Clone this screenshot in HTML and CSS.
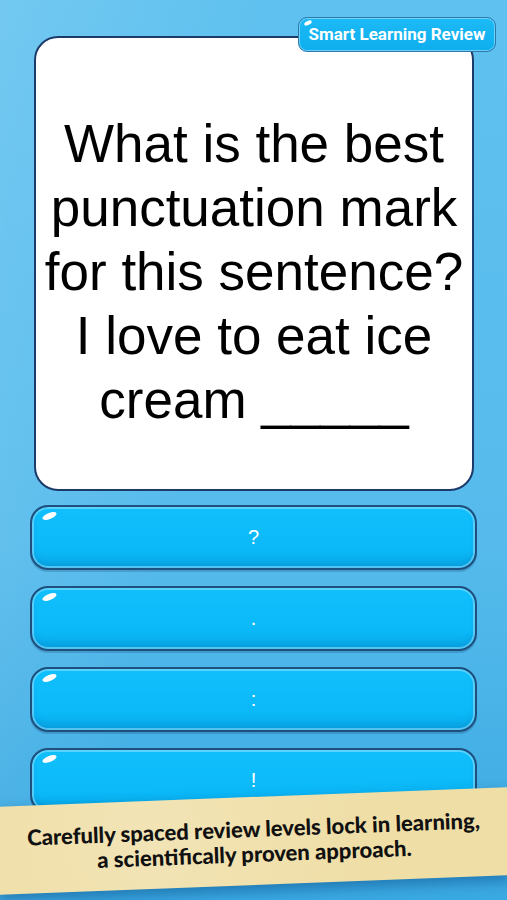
FILE: index.html
```html
<!DOCTYPE html>
<html lang="en">
  <head>
    <meta charset="utf-8" />
    <title>Smart Learning Review</title>
    <link rel="stylesheet" href="styles.css">
  </head>

  <body>
    <div class="screen">
      <div class="badge">Smart Learning Review</div>

      <div class="question">
        <p>What is the best punctuation mark for this sentence? I love to eat ice cream _____</p>
      </div>

      <ul class="answers">
        <li><button>?</button></li>
        <li><button>.</button></li>
        <li><button>:</button></li>
        <li><button>!</button></li>
      </ul>

      <div class="banner">
        <p>Carefully spaced review levels lock in learning,<br>a scientifically proven approach.</p>
      </div>
    </div>
  </body>
</html>
```

FILE: styles.css
```css
html,
body {
  margin: 0;
  padding: 0;
}

.screen {
  position: relative;
  width: 507px;
  height: 900px;
  overflow: hidden;
  box-sizing: border-box;
  padding: 36px 0 0;
  background:
    linear-gradient(100deg, rgba(255, 255, 255, 0.12) 0%, rgba(255, 255, 255, 0) 40%),
    linear-gradient(180deg, #5fc1ef 0%, #56bbec 60%, #3aa9e2 100%);
  font-family: "Liberation Sans", Arial, sans-serif;
}

.badge {
  position: absolute;
  top: 17px;
  left: 298px;
  width: 198px;
  height: 35px;
  box-sizing: border-box;
  border: 1px solid #2b78ad;
  border-radius: 9px;
  background: linear-gradient(180deg, #1cbaf6 0%, #0eaeee 100%);
  box-shadow: inset 0 0 0 1px rgba(170, 230, 255, 0.6);
  color: #fff;
  font-family: Roboto, "Liberation Sans", sans-serif;
  font-weight: bold;
  font-size: 17px;
  line-height: 33px;
  text-align: center;
  white-space: nowrap;
  z-index: 2;
}

.badge::before {
  content: "";
  position: absolute;
  top: 3px;
  left: 5px;
  width: 8px;
  height: 4px;
  border-radius: 50%;
  background: #fff;
  transform: rotate(-25deg);
}

.question {
  margin: 0 0 0 34px;
  width: 440px;
  height: 455px;
  box-sizing: border-box;
  border: 2px solid #1c3b6b;
  border-radius: 24px;
  background: #fff;
  display: flex;
  align-items: center;
  justify-content: center;
  padding: 16px 2px 0;
}

.question p {
  margin: 0;
  font-size: 53px;
  line-height: 64px;
  text-align: center;
  color: #000;
}

.answers {
  list-style: none;
  margin: 14px 0 0 30px;
  padding: 0;
  width: 447px;
  display: flex;
  flex-direction: column;
  gap: 16px;
}

.answers button {
  position: relative;
  display: block;
  width: 100%;
  height: 65px;
  border: 2px solid #1f4f7c;
  border-radius: 18px;
  background: linear-gradient(180deg, #10bffc 0%, #0bb9f8 70%, #08a9e8 100%);
  box-shadow:
    inset 0 0 0 2px rgba(150, 225, 255, 0.55),
    inset 0 -5px 6px rgba(0, 90, 160, 0.18),
    0 2px 0 rgba(20, 70, 120, 0.25);
  color: #fff;
  font-family: "Liberation Sans", Arial, sans-serif;
  font-size: 20px;
  padding: 0;
}

.answers button::before {
  content: "";
  position: absolute;
  top: 6px;
  left: 10px;
  width: 15px;
  height: 6px;
  border-radius: 50%;
  background: #fff;
  transform: rotate(-22deg);
}

.banner {
  position: absolute;
  left: -4px;
  top: 797px;
  width: 514px;
  height: 88px;
  box-sizing: border-box;
  background:
    radial-gradient(circle at 30% 40%, rgba(255, 255, 255, 0.18), rgba(255, 255, 255, 0) 60%),
    #efdea6;
  border-left: 2px solid #3a3a3a;
  transform: rotate(-2.2deg);
  box-shadow: 0 6px 14px rgba(0, 60, 120, 0.45);
  display: flex;
  align-items: center;
  justify-content: center;
  z-index: 3;
}

.banner p {
  margin: 0;
  font-family: Lato, "Open Sans", sans-serif;
  font-weight: 900;
  font-size: 22px;
  line-height: 25px;
  text-align: center;
  color: #111;
}
```
